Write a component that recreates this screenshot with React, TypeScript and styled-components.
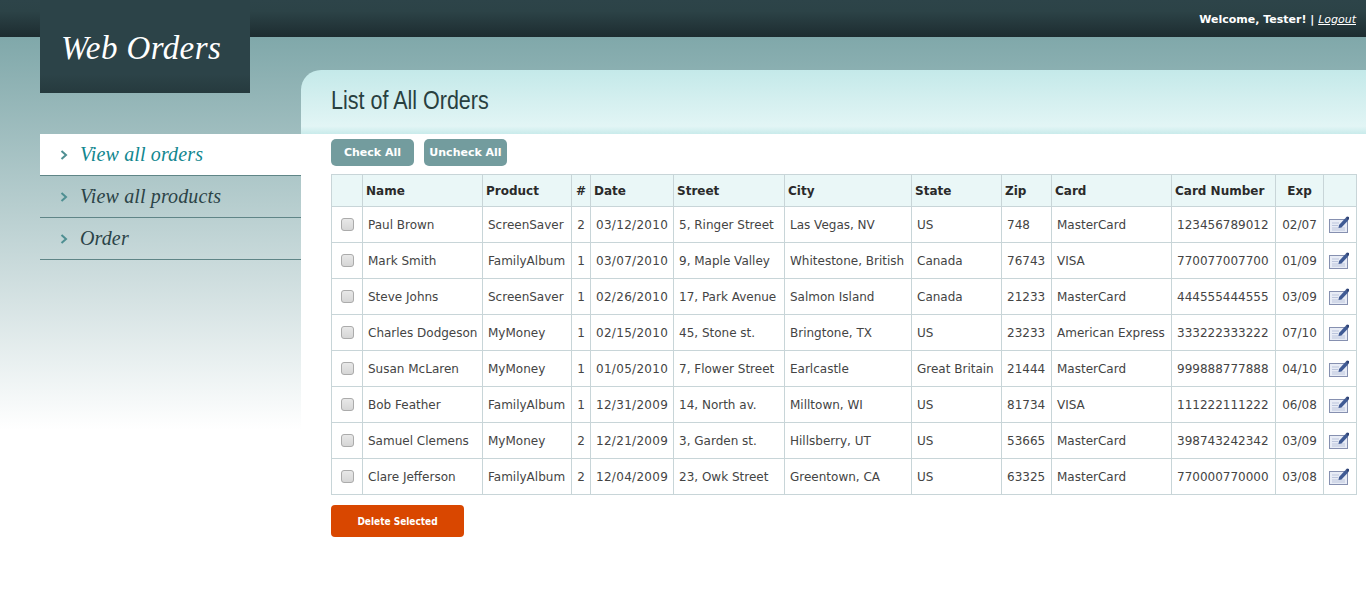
import React from "react";
import styled, { createGlobalStyle } from "styled-components";

const Global = createGlobalStyle`
  html, body { margin: 0; padding: 0; background: #fff; }
  body { font-family: "DejaVu Sans", Verdana, sans-serif; overflow: hidden; }
`;

const Page = styled.div`
  width: 1366px;
  height: 613px;
  display: flex;
  flex-direction: column;
`;

const TopBar = styled.header`
  height: 37px;
  flex: none;
  display: flex;
  justify-content: space-between;
  padding: 0 10px 0 40px;
  background: linear-gradient(#2d4449 0%, #2c4347 30%, #1d2c30 100%);
  color: #fff;
`;

const Logo = styled.div`
  width: 210px;
  height: 93px;
  box-sizing: border-box;
  padding: 29px 0 0 21px;
  background: linear-gradient(#2c4348 0%, #2c4348 80%, #263a3e 100%);
  font-family: "Liberation Serif", serif;
  font-style: italic;
  font-size: 33px;
  line-height: 38px;
  letter-spacing: 0.4px;
  color: #fff;
  z-index: 1;
`;

const Welcome = styled.div`
  font-size: 11px;
  line-height: 13px;
  font-weight: bold;
  padding-top: 13px;
`;

const Logout = styled.a`
  font-weight: normal;
  font-style: italic;
  color: #fff;
  text-decoration: underline;
`;

const Main = styled.div`
  flex: 1;
  display: flex;
  background: linear-gradient(#80a8aa 0, #fff 393px);
`;

const Sidebar = styled.nav`
  width: 261px;
  margin-left: 40px;
  padding-top: 97px;
  flex: none;
`;

const NavItem = styled.div<{ $active?: boolean }>`
  height: 41px;
  border-bottom: 1px solid #5f8587;
  display: flex;
  align-items: center;
  padding-left: 20px;
  gap: 12px;
  background: ${(p) => (p.$active ? "#fff" : "transparent")};
  color: ${(p) => (p.$active ? "#11878f" : "#2b4347")};
  font-family: "Liberation Serif", serif;
  font-style: italic;
  font-size: 20px;
  letter-spacing: 0.13px;
`;

const Content = styled.main`
  flex: 1;
  margin-top: 33px;
  display: flex;
  flex-direction: column;
`;

const TitleBand = styled.div`
  height: 64px;
  flex: none;
  box-sizing: border-box;
  padding: 15px 0 0 30px;
  border-top-left-radius: 20px;
  background: linear-gradient(#c4e9e9 0%, #e2f5f5 88%, #c9ebeb 100%);
`;

const Title = styled.h1`
  margin: 0;
  font-family: "Liberation Sans", sans-serif;
  font-weight: normal;
  font-size: 26px;
  line-height: 30px;
  color: #28403f;
  transform: scaleX(0.827);
  transform-origin: left center;
`;

const Body = styled.div`
  flex: 1;
  background: #fff;
  padding: 5px 10px 0 30px;
`;

const Actions = styled.div`
  display: flex;
  gap: 10px;
  margin-bottom: 8px;
`;

const SoftButton = styled.button`
  width: 83px;
  height: 27px;
  padding: 0;
  border: 0;
  border-radius: 5px;
  background: #739c9e;
  color: #fff;
  font-family: "DejaVu Sans", sans-serif;
  font-weight: bold;
  font-size: 11px;
`;

const Table = styled.table`
  width: 1025px;
  table-layout: fixed;
  border-collapse: collapse;
  font-size: 12px;
  color: #444;
`;

const Th = styled.th<{ $center?: boolean }>`
  height: 32px;
  box-sizing: border-box;
  padding: 0 3px;
  border: 1px solid #c8d5d8;
  background: #eaf7f7;
  color: #2a2a2a;
  font-weight: bold;
  font-size: 12px;
  text-align: ${(p) => (p.$center ? "center" : "left")};
  white-space: nowrap;
  overflow: hidden;
`;

const Td = styled.td<{ $center?: boolean; $wide?: boolean }>`
  height: 36px;
  box-sizing: border-box;
  padding: 0 5px;
  border: 1px solid #c8d5d8;
  text-align: ${(p) => (p.$center ? "center" : "left")};
  letter-spacing: ${(p) => (p.$wide ? "0.3px" : "0")};
  white-space: nowrap;
  overflow: hidden;
`;

const Check = styled.input.attrs({ type: "checkbox" })`
  appearance: none;
  display: block;
  margin: 0 auto;
  width: 13px;
  height: 13px;
  border: 1px solid #ababab;
  border-radius: 3px;
  background: linear-gradient(#e8e8e8, #d6d6d6);
`;

const DeleteButton = styled.button`
  display: block;
  width: 133px;
  height: 32px;
  margin-top: 10px;
  padding: 0;
  border: 0;
  border-radius: 4px;
  background: #d94700;
  color: #fff;
  font-family: "DejaVu Sans Condensed", "DejaVu Sans", sans-serif;
  font-stretch: condensed;
  font-weight: bold;
  font-size: 10px;
`;

const IconWrap = styled.span`
  display: block;
  width: 20px;
  height: 17px;
`;

const Chevron = () => (
  <svg width="8" height="10" viewBox="0 0 8 10" fill="none">
    <path d="M1.5 1 L6 5 L1.5 9" stroke="#4f8f92" strokeWidth="2" />
  </svg>
);

const EditIcon = () => (
  <IconWrap>
    <svg width="20" height="17" viewBox="0 0 20 17">
      <rect x="0.5" y="3.5" width="18" height="13" fill="#e8ecf6" stroke="#8690b0" />
      <path d="M3 7h7M3 9.5h6M3 12h13M3 14h13" stroke="#bcc5dc" strokeWidth="1" />
      <path d="M9.5 12 L10 9 L16.5 2 L19 4.5 L12.5 11.5 Z" fill="#3f5a94" />
      <path d="M16.5 2 L18 0.5 L20 1 L20 3 L19 4.5 Z" fill="#2f4478" />
    </svg>
  </IconWrap>
);

const widths = [31, 120, 89, 19, 83, 111, 127, 90, 50, 120, 104, 48, 33];

const orders = [
  ["Paul Brown", "ScreenSaver", "2", "03/12/2010", "5, Ringer Street", "Las Vegas, NV", "US", "748", "MasterCard", "123456789012", "02/07"],
  ["Mark Smith", "FamilyAlbum", "1", "03/07/2010", "9, Maple Valley", "Whitestone, British", "Canada", "76743", "VISA", "770077007700", "01/09"],
  ["Steve Johns", "ScreenSaver", "1", "02/26/2010", "17, Park Avenue", "Salmon Island", "Canada", "21233", "MasterCard", "444555444555", "03/09"],
  ["Charles Dodgeson", "MyMoney", "1", "02/15/2010", "45, Stone st.", "Bringtone, TX", "US", "23233", "American Express", "333222333222", "07/10"],
  ["Susan McLaren", "MyMoney", "1", "01/05/2010", "7, Flower Street", "Earlcastle", "Great Britain", "21444", "MasterCard", "999888777888", "04/10"],
  ["Bob Feather", "FamilyAlbum", "1", "12/31/2009", "14, North av.", "Milltown, WI", "US", "81734", "VISA", "111222111222", "06/08"],
  ["Samuel Clemens", "MyMoney", "2", "12/21/2009", "3, Garden st.", "Hillsberry, UT", "US", "53665", "MasterCard", "398743242342", "03/09"],
  ["Clare Jefferson", "FamilyAlbum", "2", "12/04/2009", "23, Owk Street", "Greentown, CA", "US", "63325", "MasterCard", "770000770000", "03/08"],
];

const headers = ["Name", "Product", "#", "Date", "Street", "City", "State", "Zip", "Card", "Card Number", "Exp"];

export default function App() {
  return (
    <Page>
      <Global />
      <TopBar>
        <Logo>Web Orders</Logo>
        <Welcome>
          Welcome, Tester! | <Logout href="#">Logout</Logout>
        </Welcome>
      </TopBar>
      <Main>
        <Sidebar>
          <NavItem $active><Chevron />View all orders</NavItem>
          <NavItem><Chevron />View all products</NavItem>
          <NavItem><Chevron />Order</NavItem>
        </Sidebar>
        <Content>
          <TitleBand>
            <Title>List of All Orders</Title>
          </TitleBand>
          <Body>
            <Actions>
              <SoftButton>Check All</SoftButton>
              <SoftButton>Uncheck All</SoftButton>
            </Actions>
            <Table>
              <colgroup>
                {widths.map((w, i) => (
                  <col key={i} style={{ width: w }} />
                ))}
              </colgroup>
              <thead>
                <tr>
                  <Th />
                  {headers.map((h) => (
                    <Th key={h} $center={h === "#" || h === "Exp"}>{h}</Th>
                  ))}
                  <Th />
                </tr>
              </thead>
              <tbody>
                {orders.map((row) => (
                  <tr key={row[0]}>
                    <Td><Check /></Td>
                    {row.map((c, i) => (
                      <Td key={i} $center={i === 2 || i === 10} $wide={i === 3}>{c}</Td>
                    ))}
                    <Td><EditIcon /></Td>
                  </tr>
                ))}
              </tbody>
            </Table>
            <DeleteButton>Delete Selected</DeleteButton>
          </Body>
        </Content>
      </Main>
    </Page>
  );
}
